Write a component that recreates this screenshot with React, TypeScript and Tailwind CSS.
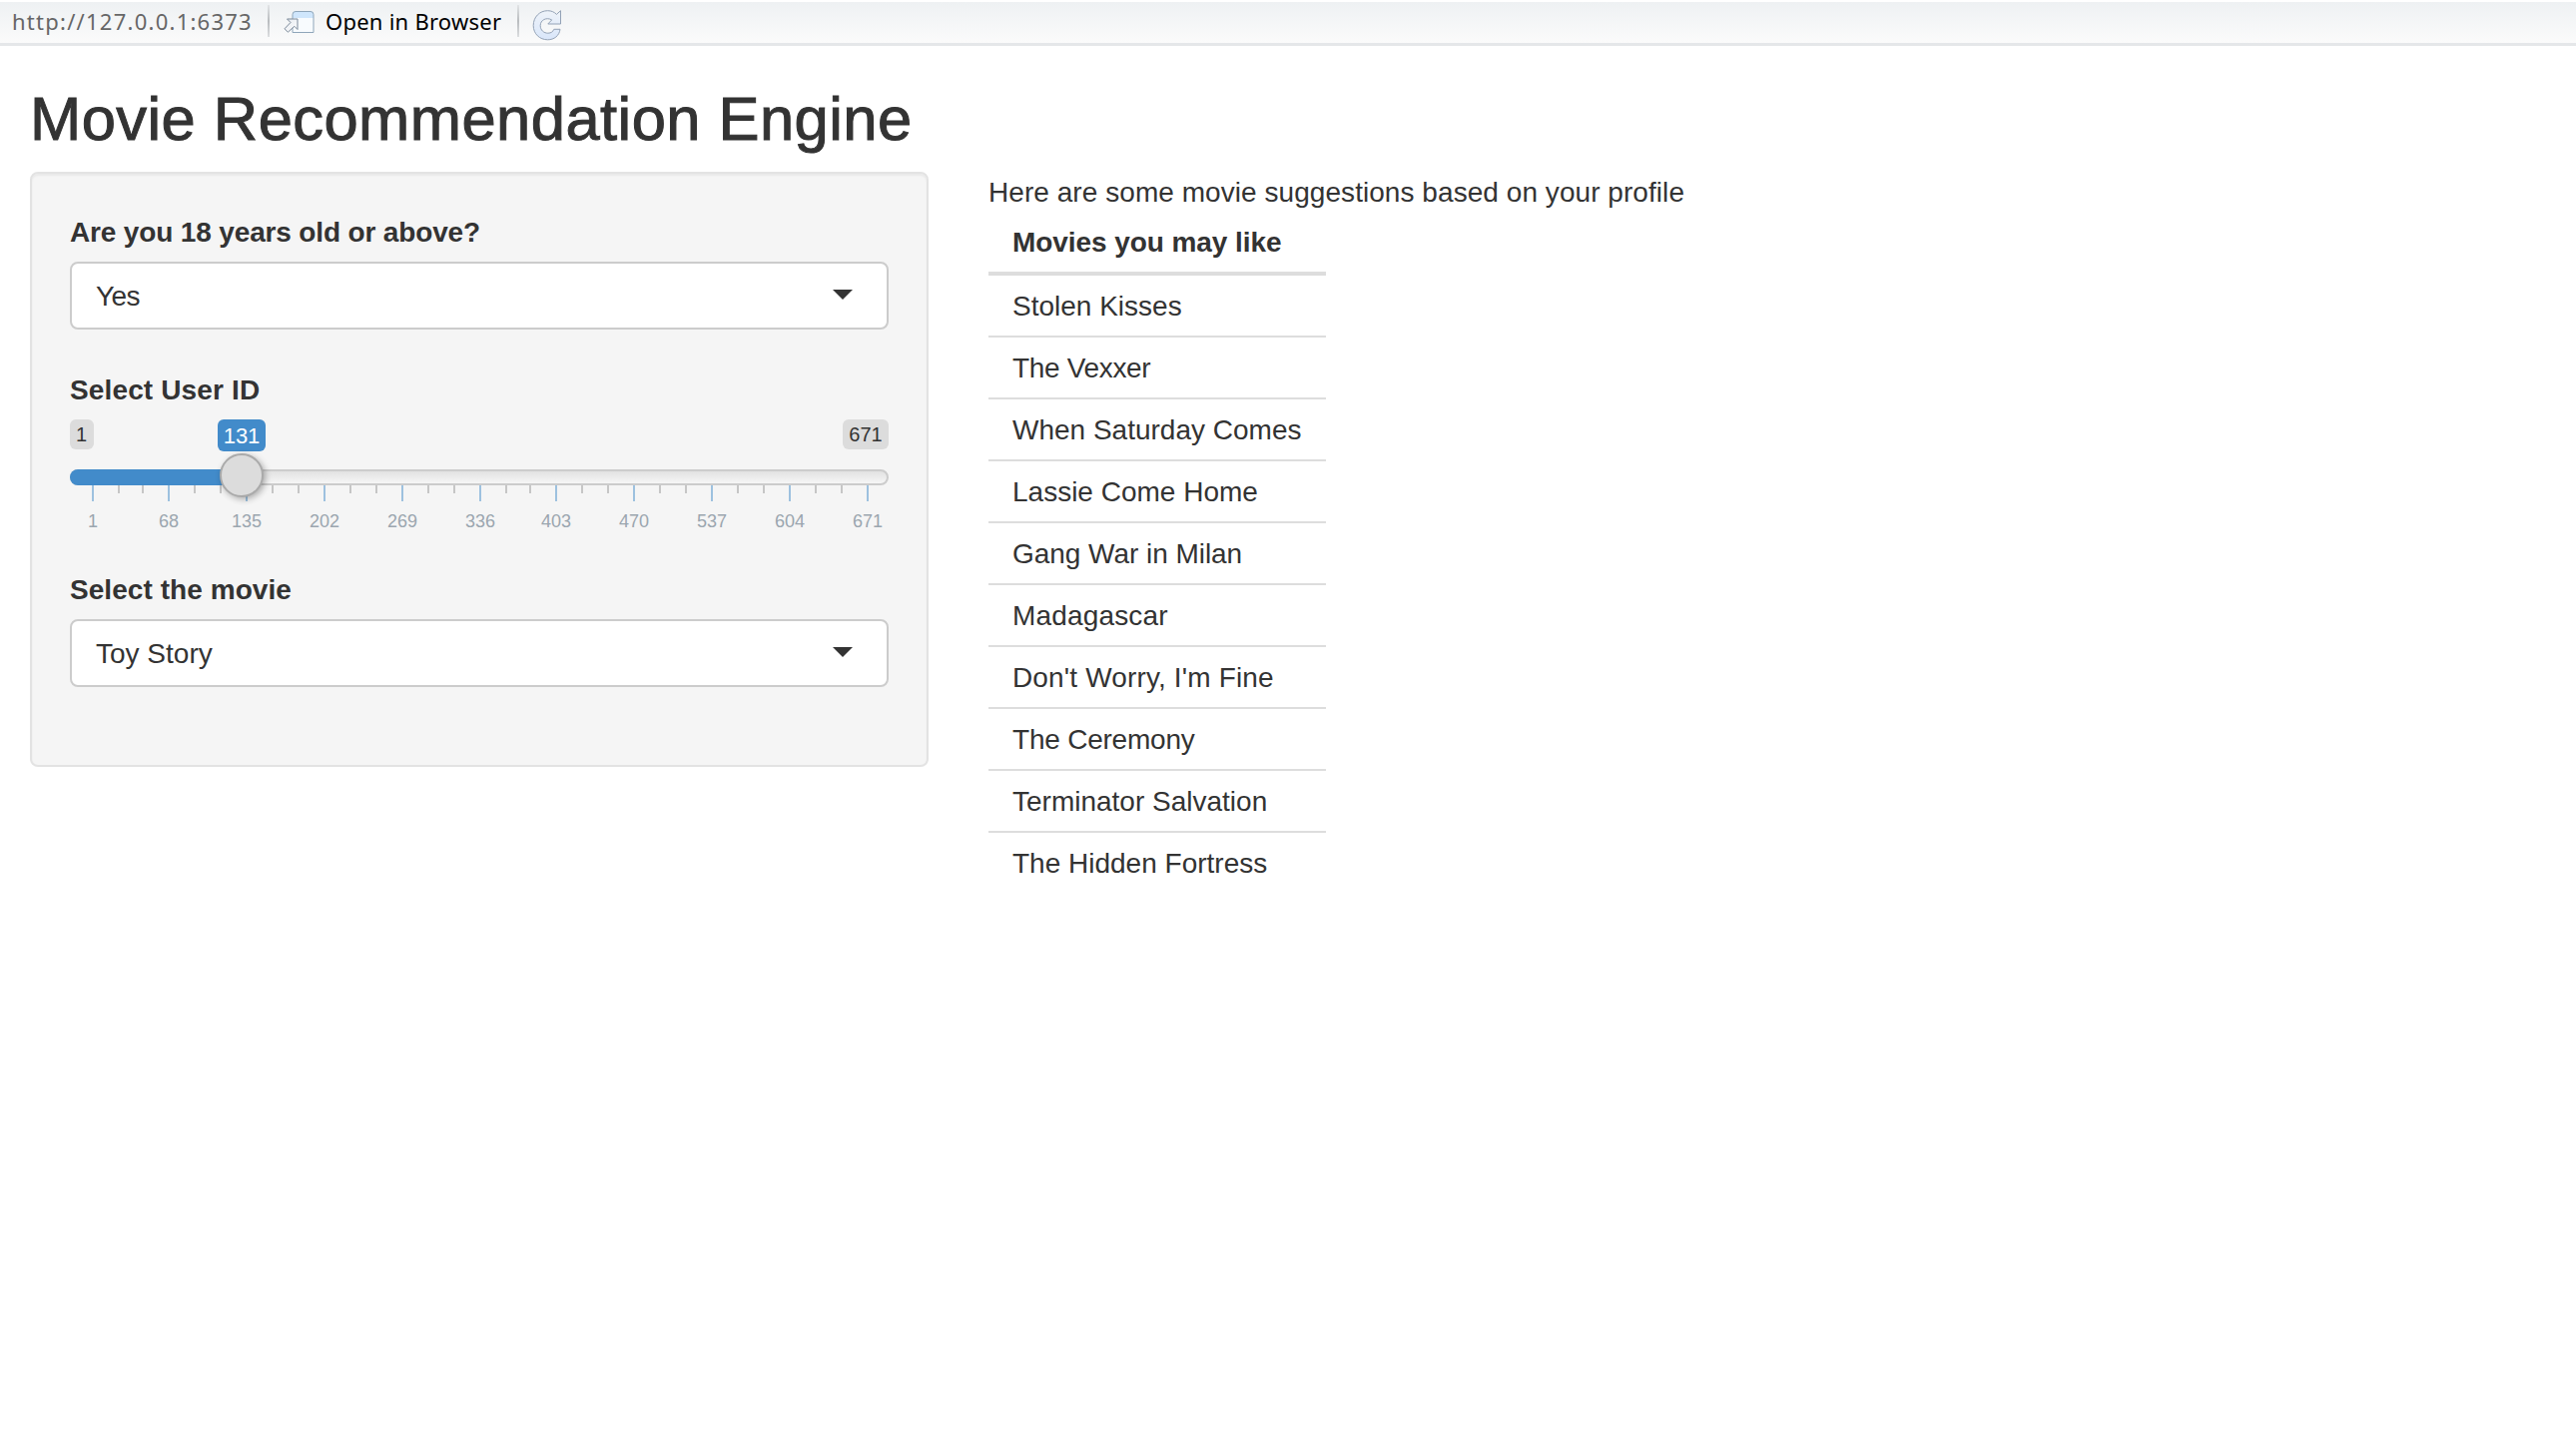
import React from "react";

const movies = [
  { title: "Stolen Kisses", tracking: "tracking-normal" },
  { title: "The Vexxer", tracking: "tracking-[-0.33px]" },
  { title: "When Saturday Comes", tracking: "tracking-normal" },
  { title: "Lassie Come Home", tracking: "tracking-normal" },
  { title: "Gang War in Milan", tracking: "tracking-[-0.04px]" },
  { title: "Madagascar", tracking: "tracking-[0.16px]" },
  { title: "Don't Worry, I'm Fine", tracking: "tracking-[0.15px]" },
  { title: "The Ceremony", tracking: "tracking-[-0.22px]" },
  { title: "Terminator Salvation", tracking: "tracking-normal" },
  { title: "The Hidden Fortress", tracking: "tracking-normal" },
];

// Offsets from the left end of the slider track.
const majorTicks = [
  { x: 22, label: "1" },
  { x: 98, label: "68" },
  { x: 176, label: "135" },
  { x: 254, label: "202" },
  { x: 332, label: "269" },
  { x: 410, label: "336" },
  { x: 486, label: "403" },
  { x: 564, label: "470" },
  { x: 642, label: "537" },
  { x: 720, label: "604" },
  { x: 798, label: "671" },
];
const minorTicks = [
  48, 72, 124, 150, 202, 228, 280, 306, 358, 384, 436, 460, 512, 538, 590, 616, 668, 694, 746, 772,
];

function OpenInBrowserIcon() {
  return (
    <svg className="block h-6 w-8" viewBox="0 0 32 24" fill="none">
      <defs>
        <linearGradient id="arrowFill" x1="0" y1="0" x2="1" y2="1">
          <stop offset="0" stopColor="#e4e8ee" />
          <stop offset="1" stopColor="#ffffff" />
        </linearGradient>
      </defs>
      <path d="M9 22.5V4.5Q9 1.5 12 1.5H27Q30 1.5 30 4.5V22.5Z" fill="#f8fbfe" />
      <path d="M9 8V4.5Q9 1.5 12 1.5H27Q30 1.5 30 4.5V8Z" fill="#cfe6fc" />
      <path d="M9 22.5V4.5Q9 1.5 12 1.5H27Q30 1.5 30 4.5V22.5Z" stroke="#8fa6ba" />
      <path
        d="M3.5 9H14V19.5L10.8 16.3L4.4 22.2L1 18.8L7 12.5Z"
        fill="url(#arrowFill)"
        stroke="#7b8999"
        strokeLinejoin="round"
      />
    </svg>
  );
}

function RefreshIcon() {
  return (
    <svg className="block h-8 w-7.5" viewBox="0 0 30 32" fill="none">
      <defs>
        <linearGradient id="refreshFill" x1="0" y1="0" x2="0" y2="1">
          <stop offset="0" stopColor="#eef3f9" />
          <stop offset="1" stopColor="#d9e6fa" />
        </linearGradient>
      </defs>
      <path
        d="M28.5 1.7V15H15.8L19.7 10.9C14 7.8 8.2 11.2 8.2 16.6C8.2 21.3 11.8 24.2 15.8 24.2C19 24.2 21 22.6 21.8 20.3H28C27.2 26.8 22 30.8 15.5 30.8C7.5 30.8 1.2 24.8 1.2 16.6C1.2 8 7.5 1.7 15.5 1.7C19.2 1.7 22.2 3 24.4 5.4Z"
        fill="url(#refreshFill)"
        stroke="#93a2b6"
        strokeLinejoin="round"
      />
    </svg>
  );
}

function Separator() {
  return <div className="mb-1 h-8 w-[2px] bg-linear-to-b from-[#e2e4e6] via-[#b9bcbf] to-[#dcdee0]" />;
}

function Toolbar() {
  return (
    <div className="flex h-[46px] items-center border-t-2 border-b-[3px] border-t-white border-b-[#e5e7e9] bg-linear-to-b from-[#eef1f3] to-[#fbfbfb] pl-3 font-['Noto_Sans',sans-serif] text-[22px] leading-[30px]">
      <span className="mb-[3px] w-[256px] tracking-[1.25px] whitespace-nowrap text-[#666]">http://127.0.0.1:6373</span>
      <Separator />
      <button className="mb-px ml-[14px] flex w-[234px] items-center gap-[10px] whitespace-nowrap text-black">
        <OpenInBrowserIcon />
        <span className="mb-[2px] tracking-[0.25px]">Open in Browser</span>
      </button>
      <Separator />
      <button className="mt-1 ml-[13px]">
        <RefreshIcon />
      </button>
    </div>
  );
}

function SelectBox({ value, tracking }: { value: string; tracking: string }) {
  return (
    <div className="mt-[9px] flex h-[68px] items-center justify-between rounded-lg border-2 border-[#ccc] bg-white pr-[34px] pl-6">
      <span className={`pt-[2px] ${tracking}`}>{value}</span>
      <span className="mb-[2px] h-0 w-0 border-x-[10px] border-t-[10px] border-x-transparent border-t-[#333]" />
    </div>
  );
}

function Slider() {
  return (
    <div className="relative mt-[9px] h-[110px]">
      <div className="flex items-start justify-between text-[20px] leading-[30px]">
        <span className="w-6 rounded-md bg-[#dcdcdc] pr-px text-center">1</span>
        <span className="w-[46px] rounded-md bg-[#dcdcdc] text-center">671</span>
      </div>
      <div className="mt-5 h-4 rounded-full border-2 border-[#ccc] bg-linear-to-b from-[#e2e2e2] to-[#f6f6f6]" />
      <div className="absolute top-[50px] left-0 h-4 w-[172px] rounded-l-full bg-[#428bca]" />
      <div className="relative text-[18px] leading-[26px] text-[#9ba6af]">
        {minorTicks.map((x) => (
          <span key={x} className="absolute top-0 h-2 w-[2px] bg-[#c6c6c6]" style={{ left: x }} />
        ))}
        {majorTicks.map(({ x, label }) => (
          <span key={x} className="absolute top-0 flex w-[2px] flex-col items-center" style={{ left: x }}>
            <span className="h-4 w-[2px] bg-[#9dc1df]" />
            <span className="mt-[7px]">{label}</span>
          </span>
        ))}
      </div>
      <span className="absolute top-0 left-[148px] h-8 w-12 rounded-md bg-[#428bca] pt-px text-center text-[22px] leading-8 text-white">
        131
      </span>
      <div className="absolute top-[34px] left-[150px] h-11 w-11 rounded-full border-2 border-[#aaa] bg-[#dcdcdc] shadow-[2px_2px_6px_rgba(0,0,0,0.3)]" />
    </div>
  );
}

export default function App() {
  return (
    <div className="min-h-[1436px] bg-white font-['Liberation_Sans',Arial,sans-serif] text-[28px] leading-10 text-[#333]">
      <Toolbar />
      <main className="px-[30px] pt-10">
        <h1 className="text-[61.5px] leading-[66px] font-normal tracking-[0.44px] [-webkit-text-stroke:1px_#333]">
          Movie Recommendation Engine
        </h1>
        <div className="mt-5 flex items-start gap-[60px]">
          <section className="h-[596px] w-[900px] rounded-lg border-2 border-[#e3e3e3] bg-[#f5f5f5] px-[38px] pt-[39px] shadow-[inset_0_2px_2px_rgba(0,0,0,0.05)]">
            <div className="font-bold tracking-[-0.15px]">Are you 18 years old or above?</div>
            <SelectBox value="Yes" tracking="tracking-[-0.6px]" />
            <div className="mt-[41px] font-bold tracking-[0.14px]">Select User ID</div>
            <Slider />
            <div className="mt-[41px] font-bold tracking-[0.06px]">Select the movie</div>
            <SelectBox value="Toy Story" tracking="tracking-normal" />
          </section>
          <section className="pt-px">
            <p className="tracking-[0.054px]">Here are some movie suggestions based on your profile</p>
            <table className="w-[338px] border-separate border-spacing-0 whitespace-nowrap">
              <thead>
                <tr>
                  <th className="border-b-4 border-[#ddd] px-6 pt-[10px] pb-[9px] text-left font-bold tracking-[-0.07px]">
                    Movies you may like
                  </th>
                </tr>
              </thead>
              <tbody>
                {movies.map(({ title, tracking }, i) => (
                  <tr key={title}>
                    <td className={`${i > 0 ? "border-t-2" : ""} border-[#ddd] pt-[11px] pb-[9px] pl-6 ${tracking}`}>
                      {title}
                    </td>
                  </tr>
                ))}
              </tbody>
            </table>
          </section>
        </div>
      </main>
    </div>
  );
}
